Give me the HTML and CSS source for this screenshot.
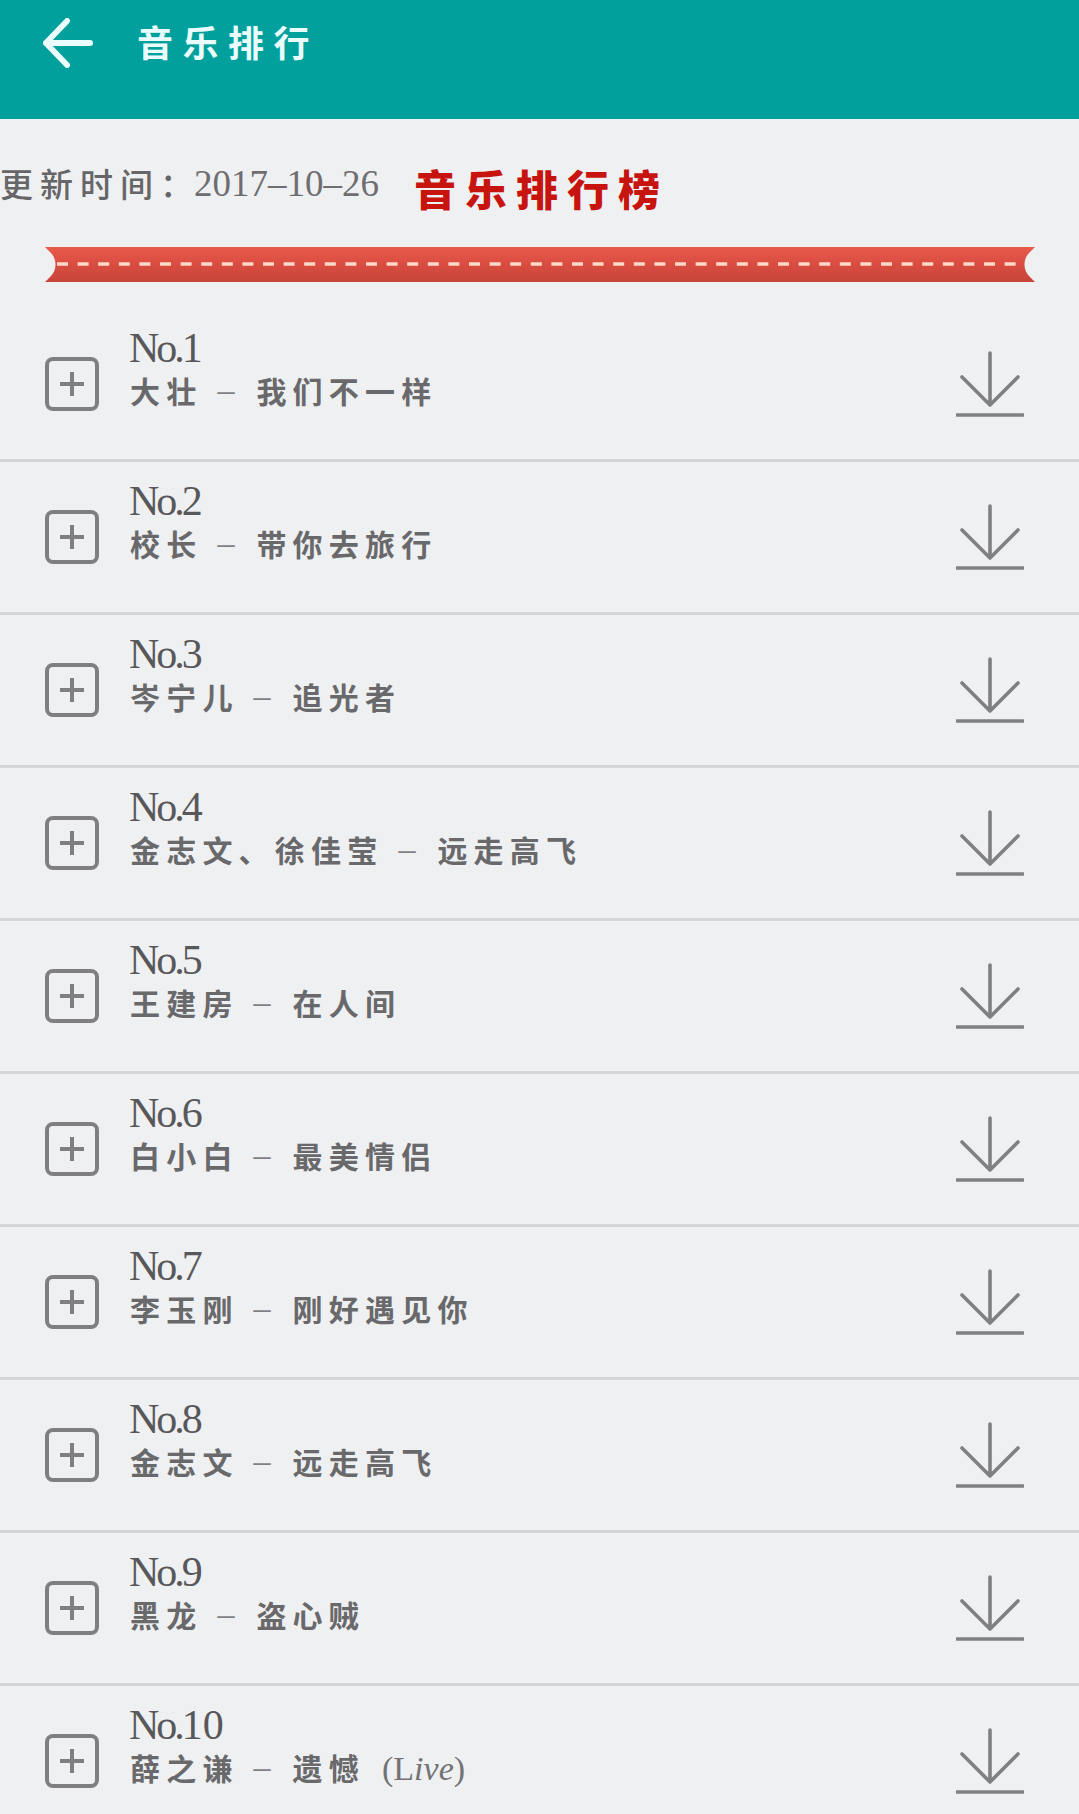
FILE: index.html
```html
<!DOCTYPE html>
<html lang="zh-CN">
<head>
<meta charset="utf-8">
<title>音乐排行</title>
<link rel="stylesheet" href="styles.css">
</head>
<body>
<svg class="defs" width="0" height="0" aria-hidden="true">
  <symbol id="add" viewBox="0 0 54 54">
    <rect x="2" y="2" width="50" height="50" rx="6" fill="none" stroke="currentColor" stroke-width="4"/>
    <path d="M15 27H39M27 15V39" fill="none" stroke="currentColor" stroke-width="4"/>
  </symbol>
  <symbol id="download" viewBox="0 0 68 68">
    <path d="M34 3V55M6 27L34 55L62 27" fill="none" stroke="currentColor" stroke-width="3.6" stroke-linecap="round" stroke-linejoin="round"/>
    <path d="M1 65H67" fill="none" stroke="currentColor" stroke-width="3.6" stroke-linecap="round"/>
  </symbol>
</svg>
<div class="page">
  <header class="topbar">
    <svg class="back" viewBox="0 0 52 52" aria-hidden="true"><path d="M3 26H49M25 3L3 26L25 49" fill="none" stroke="#eafcfc" stroke-width="6" stroke-linecap="round" stroke-linejoin="round"/></svg>
    <h1 class="page-title">音乐排行</h1>
  </header>
  <section class="meta">
    <span class="updated">更新时间：</span>
    <span class="date">2017–10–26</span>
    <span class="chart-title">音乐排行榜</span>
  </section>
  <svg class="ribbon" viewBox="0 0 990 35" aria-hidden="true">
    <defs>
      <linearGradient id="rib" x1="0" y1="0" x2="0" y2="1">
        <stop offset="0" stop-color="#e95a4b"/>
        <stop offset="0.5" stop-color="#d94c40"/>
        <stop offset="1" stop-color="#c74539"/>
      </linearGradient>
    </defs>
    <path d="M0 0H990L984 6C978 12 978 23 984 29L990 35H0L6 29C12 23 12 12 6 6Z" fill="url(#rib)"/>
    <path d="M12 17H980" stroke="#fbd8c8" stroke-width="3.4" stroke-dasharray="11 9.6"/>
  </svg>
  <main class="list">
    <article class="row">
      <svg class="add"><use href="#add"/></svg>
      <div class="info"><div class="rank"><span class="no">No.</span>1</div><div class="track"><span class="artist">大壮</span><span class="dash">–</span><span class="song">我们不一样</span></div></div>
      <svg class="dl"><use href="#download"/></svg>
    </article>
    <article class="row">
      <svg class="add"><use href="#add"/></svg>
      <div class="info"><div class="rank"><span class="no">No.</span>2</div><div class="track"><span class="artist">校长</span><span class="dash">–</span><span class="song">带你去旅行</span></div></div>
      <svg class="dl"><use href="#download"/></svg>
    </article>
    <article class="row">
      <svg class="add"><use href="#add"/></svg>
      <div class="info"><div class="rank"><span class="no">No.</span>3</div><div class="track"><span class="artist">岑宁儿</span><span class="dash">–</span><span class="song">追光者</span></div></div>
      <svg class="dl"><use href="#download"/></svg>
    </article>
    <article class="row">
      <svg class="add"><use href="#add"/></svg>
      <div class="info"><div class="rank"><span class="no">No.</span>4</div><div class="track"><span class="artist">金志文、徐佳莹</span><span class="dash">–</span><span class="song">远走高飞</span></div></div>
      <svg class="dl"><use href="#download"/></svg>
    </article>
    <article class="row">
      <svg class="add"><use href="#add"/></svg>
      <div class="info"><div class="rank"><span class="no">No.</span>5</div><div class="track"><span class="artist">王建房</span><span class="dash">–</span><span class="song">在人间</span></div></div>
      <svg class="dl"><use href="#download"/></svg>
    </article>
    <article class="row">
      <svg class="add"><use href="#add"/></svg>
      <div class="info"><div class="rank"><span class="no">No.</span>6</div><div class="track"><span class="artist">白小白</span><span class="dash">–</span><span class="song">最美情侣</span></div></div>
      <svg class="dl"><use href="#download"/></svg>
    </article>
    <article class="row">
      <svg class="add"><use href="#add"/></svg>
      <div class="info"><div class="rank"><span class="no">No.</span>7</div><div class="track"><span class="artist">李玉刚</span><span class="dash">–</span><span class="song">刚好遇见你</span></div></div>
      <svg class="dl"><use href="#download"/></svg>
    </article>
    <article class="row">
      <svg class="add"><use href="#add"/></svg>
      <div class="info"><div class="rank"><span class="no">No.</span>8</div><div class="track"><span class="artist">金志文</span><span class="dash">–</span><span class="song">远走高飞</span></div></div>
      <svg class="dl"><use href="#download"/></svg>
    </article>
    <article class="row">
      <svg class="add"><use href="#add"/></svg>
      <div class="info"><div class="rank"><span class="no">No.</span>9</div><div class="track"><span class="artist">黑龙</span><span class="dash">–</span><span class="song">盗心贼</span></div></div>
      <svg class="dl"><use href="#download"/></svg>
    </article>
    <article class="row">
      <svg class="add"><use href="#add"/></svg>
      <div class="info"><div class="rank"><span class="no">No.</span>10</div><div class="track"><span class="artist">薛之谦</span><span class="dash">–</span><span class="song">遗憾</span><span class="live">(L<i>ive</i>)</span></div></div>
      <svg class="dl"><use href="#download"/></svg>
    </article>
  </main>
</div>
</body>
</html>
```
FILE: styles.css
```css
* { box-sizing: border-box; }
html, body { margin: 0; padding: 0; }
body {
  background: #eff0f2;
  font-family: "Noto Sans CJK SC", "Liberation Serif", serif;
  color: #6a6a6c;
}
.defs { display: block; height: 0; }
.page { height: 1814px; overflow: hidden; }

.topbar {
  height: 119px;
  background: #01a09d;
  display: flex;
  align-items: flex-start;
  padding: 18px 0 0 43px;
}
.back { width: 50px; height: 50px; flex: none; }
.page-title {
  margin: -2px 0 0 44px;
  height: 50px;
  font-size: 36px;
  line-height: 50px;
  letter-spacing: 9.5px;
  font-weight: 700;
  color: #eafcfc;
}

.meta {
  height: 128px;
  display: flex;
  align-items: center;
}
.updated {
  font-size: 33px;
  letter-spacing: 7px;
  font-weight: 500;
  color: #666668;
  width: 194px;
  flex: none;
  white-space: nowrap;
}
.date {
  font-family: "Liberation Serif", serif;
  font-size: 37px;
  color: #6e6e70;
  width: 220px;
  flex: none;
}
.chart-title {
  font-size: 42px;
  letter-spacing: 9px;
  font-weight: 900;
  color: #c8140f;
  line-height: 1.2;
  margin-top: 10px;
}

.ribbon { display: block; width: 990px; height: 35px; margin-left: 45px; }

.list { margin-top: 27px; }
.row {
  height: 153px;
  border-bottom: 3px solid #d5d5d7;
  padding: 0 55px 0 45px;
  display: flex;
  align-items: center;
}
.add { width: 54px; height: 54px; flex: none; color: #7f7f81; }
.dl { width: 68px; height: 68px; flex: none; margin-left: auto; color: #808082; }

.info { margin-left: 30px; display: flex; flex-direction: column; margin-top: -27px; }
.rank {
  font-family: "Liberation Serif", serif;
  font-size: 42px;
  line-height: 39px;
  color: #58585a;
}
.no { letter-spacing: -3px; }
.track {
  display: flex;
  align-items: center;
  height: 44px;
  font-size: 30px;
  font-weight: 700;
  letter-spacing: 6.2px;
  color: #69696b;
}
.artist { line-height: 44px; white-space: nowrap; margin-left: 1px; }
.song { line-height: 44px; white-space: nowrap; }
.dash {
  font-family: "Liberation Serif", serif;
  font-weight: 400;
  font-size: 34px;
  line-height: 44px;
  letter-spacing: 0;
  margin: 0 22px 0 15px;
  color: #808082;
}
.live {
  font-family: "Liberation Serif", serif;
  font-weight: 400;
  font-size: 34px;
  line-height: 44px;
  letter-spacing: 0;
  margin: 4px 0 0 17px;
  color: #737375;
}
```
